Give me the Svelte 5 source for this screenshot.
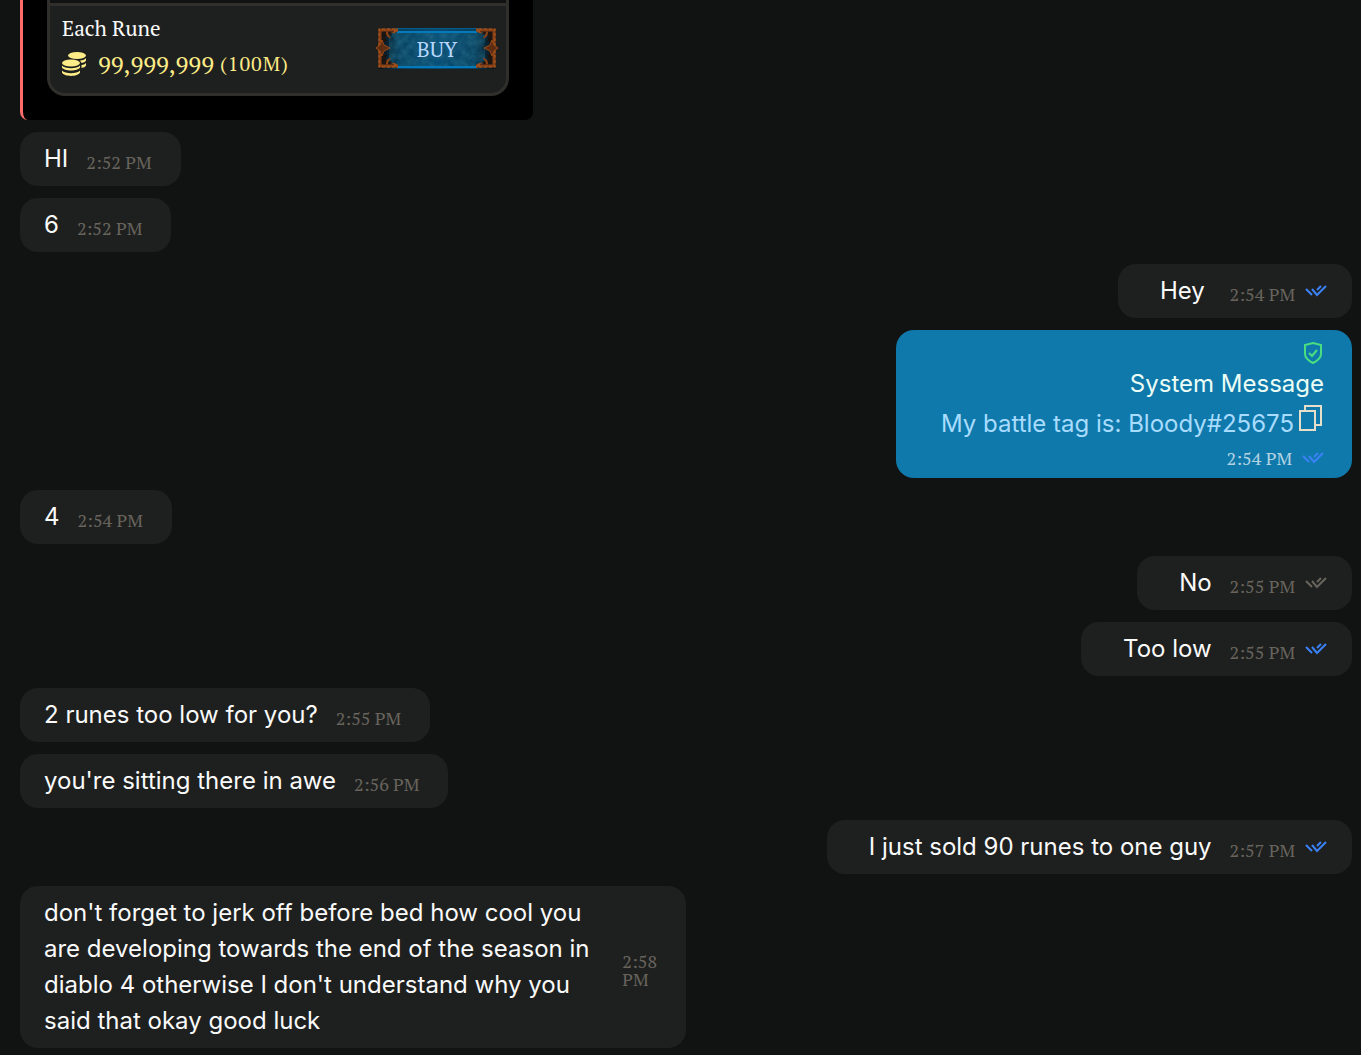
<script lang="ts">
	interface Message {
		id: number;
		text: string;
		time: string;
		from: 'them' | 'me' | 'system';
		seen?: boolean;
	}

	const messages: Message[] = [
		{ id: 1, text: 'HI', time: '2:52 PM', from: 'them' },
		{ id: 2, text: '6', time: '2:52 PM', from: 'them' },
		{ id: 3, text: 'Hey\u00a0', time: '2:54 PM', from: 'me', seen: true },
		{ id: 4, text: 'My battle tag is: Bloody#25675', time: '2:54 PM', from: 'system', seen: true },
		{ id: 5, text: '4', time: '2:54 PM', from: 'them' },
		{ id: 6, text: 'No', time: '2:55 PM', from: 'me', seen: false },
		{ id: 7, text: 'Too low', time: '2:55 PM', from: 'me', seen: true },
		{ id: 8, text: '2 runes too low for you?', time: '2:55 PM', from: 'them' },
		{ id: 9, text: "you're sitting there in awe", time: '2:56 PM', from: 'them' },
		{ id: 10, text: 'I just sold 90 runes to one guy', time: '2:57 PM', from: 'me', seen: true },
		{
			id: 11,
			text: "don't forget to jerk off before bed how cool you are developing towards the end of the season in diablo 4 otherwise I don't understand why you said that okay good luck",
			time: '2:58 PM',
			from: 'them'
		}
	];
</script>

{#snippet checks(seen: boolean | undefined)}
	<svg class="checks" class:checks--seen={seen} width="22" height="14" viewBox="0 0 22 14" aria-hidden="true">
		<path d="M1 5l6 6M7 5l5 6 9-9M12 6l4-4" />
	</svg>
{/snippet}

{#snippet corner()}
	<path d="M4 20V3h19l-3 4-4-1 1 3-4-1-3 3 2 4-3 1-1 4z" fill="#1d1512" />
	<path d="M5 21V4h18" fill="none" stroke="#8a4015" stroke-width="3" />
	<path d="M4 20V3h19" fill="none" stroke="#b0581f" stroke-width="1" stroke-dasharray="3 2" />
	<path d="M23 3c-1 4-4 5-8 4 3 0 4-1 4-3z" fill="#a34f1b" />
	<path d="M13 5c0 4 2 5 3 7-3 0-5-2-5-6z" fill="#8a4015" />
{/snippet}

<main class="chat">
	<article class="offer">
		<div class="offer-card">
			<div class="offer-top"></div>
			<div class="offer-row">
				<div class="offer-info">
					<span class="offer-label">Each Rune</span>
					<span class="offer-price">
						<svg width="24" height="24" viewBox="0 0 24 24" aria-hidden="true">
							<ellipse cx="15" cy="3.500" rx="9" ry="3.500" />
							<ellipse cx="9" cy="11" rx="9" ry="3.500" />
							<path d="M0 13.500c3 3.500 15 3.500 18 0v2c-2 4-16 4-18 0z" />
							<path d="M0 18.500c3 3.500 15 3.500 18 0v2c-2 4.500-16 4.500-18 0z" />
							<path d="M18 8.500c3 0 5-1 6-2.500v2.500c-1 1.500-2 2-4.500 2.500zM19.500 13c2 0 3.500-1 4.500-2v2.500c-1 1.500-2 2-4.500 2.500z" />
						</svg>
						<span>99,999,999</span>
						<span class="offer-short">(100M)</span>
					</span>
				</div>
				<button class="buy" type="button">
					<svg class="buy-frame" viewBox="0 0 124 44" aria-hidden="true">
						<defs>
							<linearGradient id="face" x1="0" x2="1" y1="0" y2="0">
								<stop offset="0" stop-color="#0b1114" />
								<stop offset="0.180" stop-color="#06405f" />
								<stop offset="0.5" stop-color="#064d76" />
								<stop offset="0.820" stop-color="#06405f" />
								<stop offset="1" stop-color="#0b1114" />
							</linearGradient>
							<filter id="stone" x="0" y="0" width="1" height="1">
								<feTurbulence type="fractalNoise" baseFrequency="0.15" numOctaves="3" />
								<feColorMatrix values="0 0 0 0 0.020  0 0 0 0 0.160  0 0 0 0 0.260  0.900 0 0 0 -0.150" />
							</filter>
						</defs>
						<rect x="4" y="2" width="116" height="41" fill="url(#face)" />
						<rect x="14" y="6" width="96" height="35" filter="url(#stone)" />
						<path d="M20 2.500h84" stroke="#075a8c" />
						<path d="M22 6h80M22 41h80" stroke="#067ab8" stroke-width="2" />
						<g>{@render corner()}</g>
						<g transform="translate(124 0) scale(-1 1)">{@render corner()}</g>
						<g transform="translate(0 44) scale(1 -1)">{@render corner()}</g>
						<g transform="translate(124 44) scale(-1 -1)">{@render corner()}</g>
						<g fill="#5e2d12" stroke="#9a4a1a">
							<path d="M7 14l2 5 6 3-6 3-2 5-2-5-4-3 4-3z" />
							<path d="M117 14l2 5 4 3-4 3-2 5-2-5-6-3 6-3z" />
						</g>
					</svg>
					<span class="buy-text">BUY</span>
				</button>
			</div>
		</div>
	</article>

	{#each messages as message (message.id)}
		{#if message.from === 'system'}
			<article class="system">
				<svg class="shield" width="22" height="22" viewBox="0 0 22 22" aria-hidden="true">
					<path d="M11 1l8 2v9c0 4-4 7-8 9-4-2-8-5-8-9V3z" />
					<path d="M7 11l3 3 5-6" />
				</svg>
				<strong class="system-title">System Message</strong>
				<div class="system-body">
					<span>{message.text}</span>
					<button class="copy" type="button" aria-label="Copy battle tag">
						<svg width="26" height="26" viewBox="0 0 26 26" aria-hidden="true">
							<path d="M7 6V1h16v19h-5M2 6h15v19H2z" />
						</svg>
					</button>
				</div>
				<div class="system-meta">
					<time>{message.time}</time>
					{@render checks(message.seen)}
				</div>
			</article>
		{:else}
			<article class="bubble" class:bubble--me={message.from === 'me'}>
				<p>{message.text}</p>
				<time>{message.time}</time>
				{#if message.from === 'me'}
					{@render checks(message.seen)}
				{/if}
			</article>
		{/if}
	{/each}
</main>

<style>
	:global(body) {
		background: #111312;
	}

	.chat {
		display: flex;
		flex-direction: column;
		align-items: flex-start;
		gap: 12px;
		padding: 0 9px 7px 20px;
		font-family: Inter, sans-serif;
		font-size: 24px;
		line-height: 36px;
		color: #fafafa;
	}

	button {
		padding: 0;
		border: 0;
		background: none;
		cursor: pointer;
	}

	/* Offer */

	.offer {
		box-sizing: border-box;
		width: 513px;
		max-width: 100%;
		padding: 0 24px 24px;
		background: #000;
		border-left: 3px solid #ff6b6b;
		border-radius: 0 0 8px 8px;
		font-family: 'PT Serif', 'Liberation Serif', serif;
	}

	.offer-card {
		border: 3px solid #302f2b;
		border-top: 0;
		border-radius: 0 0 18px 18px;
		background: #1e201f;
		overflow: hidden;
	}

	.offer-top {
		height: 3px;
		background: #111312;
		border-bottom: 3px solid #302f2b;
	}

	.offer-row {
		display: flex;
		align-items: center;
		justify-content: space-between;
		padding: 4px 7px 11px 12px;
	}

	.offer-info {
		display: flex;
		flex-direction: column;
	}

	.offer-label {
		font-size: 21px;
	}

	.offer-price {
		display: flex;
		align-items: center;
		font-size: 24px;
		color: #fdec87;
	}

	.offer-price svg {
		margin-right: 12px;
		fill: #fdec87;
	}

	.offer-short {
		margin-left: 6px;
		font-size: 20px;
		letter-spacing: 1px;
	}

	.buy {
		display: grid;
		place-items: center;
		width: 124px;
		height: 44px;
		margin-top: 4px;
		font-family: inherit;
		font-size: 21px;
		color: #b8d8ff;
	}

	.buy-frame,
	.buy-text {
		grid-area: 1 / 1;
	}

	.buy-text {
		z-index: 1;
		padding-top: 2px;
	}

	/* Messages */

	.bubble {
		display: flex;
		align-items: center;
		box-sizing: border-box;
		max-width: 50%;
		padding: 9px 29px 9px 24px;
		background: #1e201f;
		border-radius: 18px;
	}

	.bubble--me {
		align-self: flex-end;
		padding: 9px 25px 9px 42px;
	}

	p {
		margin: 0;
	}

	time {
		font-family: 'PT Serif', 'Liberation Serif', serif;
		font-size: 18px;
		line-height: 18px;
		color: #68645d;
	}

	.bubble time {
		margin-left: 18px;
		padding-top: 6px;
	}

	.checks {
		flex: none;
		margin-left: 10px;
		fill: none;
		stroke: #68645d;
		stroke-width: 2;
	}

	.checks--seen {
		stroke: #3b82f6;
	}

	/* System message */

	.system {
		display: flex;
		flex-direction: column;
		align-items: flex-end;
		align-self: flex-end;
		padding: 12px 28px 11px 45px;
		background: #0f79ab;
		border-radius: 18px;
	}

	.shield {
		fill: none;
		stroke: #4ade80;
		stroke-width: 2;
	}

	.system-title {
		padding-top: 2px;
		font-weight: 400;
		color: #ecfdf5;
	}

	.system-body {
		display: flex;
		align-items: center;
		gap: 4px;
		padding: 3px 0 6px;
		color: #a8dcff;
	}

	.copy {
		display: flex;
		padding-bottom: 12px;
	}

	.copy svg {
		fill: none;
		stroke: #e7dfc9;
		stroke-width: 2;
	}

	.system-meta {
		display: flex;
		align-items: center;
	}

	.system-meta time {
		color: #b4d3e2;
	}
</style>
